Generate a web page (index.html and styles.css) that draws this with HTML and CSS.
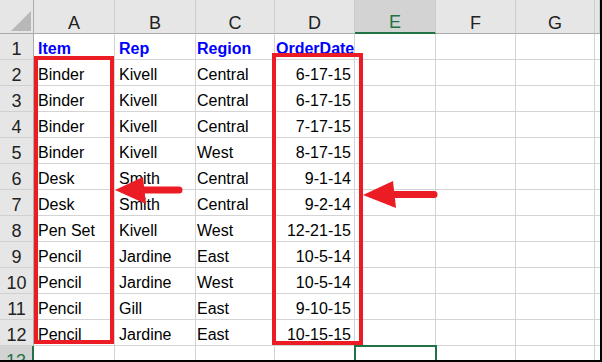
FILE: index.html
```html
<!DOCTYPE html>
<html lang="en">
<head>
    <meta charset="UTF-8">
    <meta name="viewport" content="width=device-width, initial-scale=1.0">
    <link rel="stylesheet" href="styles.css">
    <title>Sheet1</title>
</head>
<body>
    <div class="frame">
        <div class="sheet">
            <div class="corner"><span class="select-all"></span></div>
            <div class="col-head">A</div>
            <div class="col-head">B</div>
            <div class="col-head">C</div>
            <div class="col-head">D</div>
            <div class="col-head sel">E</div>
            <div class="col-head">F</div>
            <div class="col-head">G</div>
            <div class="col-head"></div>

            <div class="row-head">1</div>
            <div class="cell title">Item</div>
            <div class="cell title">Rep</div>
            <div class="cell title">Region</div>
            <div class="cell title">OrderDate</div>
            <div class="cell"></div><div class="cell"></div><div class="cell"></div><div class="cell"></div>

            <div class="row-head">2</div>
            <div class="cell">Binder</div>
            <div class="cell">Kivell</div>
            <div class="cell">Central</div>
            <div class="cell num">6-17-15</div>
            <div class="cell"></div><div class="cell"></div><div class="cell"></div><div class="cell"></div>

            <div class="row-head">3</div>
            <div class="cell">Binder</div>
            <div class="cell">Kivell</div>
            <div class="cell">Central</div>
            <div class="cell num">6-17-15</div>
            <div class="cell"></div><div class="cell"></div><div class="cell"></div><div class="cell"></div>

            <div class="row-head">4</div>
            <div class="cell">Binder</div>
            <div class="cell">Kivell</div>
            <div class="cell">Central</div>
            <div class="cell num">7-17-15</div>
            <div class="cell"></div><div class="cell"></div><div class="cell"></div><div class="cell"></div>

            <div class="row-head">5</div>
            <div class="cell">Binder</div>
            <div class="cell">Kivell</div>
            <div class="cell">West</div>
            <div class="cell num">8-17-15</div>
            <div class="cell"></div><div class="cell"></div><div class="cell"></div><div class="cell"></div>

            <div class="row-head">6</div>
            <div class="cell">Desk</div>
            <div class="cell">Smith</div>
            <div class="cell">Central</div>
            <div class="cell num">9-1-14</div>
            <div class="cell"></div><div class="cell"></div><div class="cell"></div><div class="cell"></div>

            <div class="row-head">7</div>
            <div class="cell">Desk</div>
            <div class="cell">Smith</div>
            <div class="cell">Central</div>
            <div class="cell num">9-2-14</div>
            <div class="cell"></div><div class="cell"></div><div class="cell"></div><div class="cell"></div>

            <div class="row-head">8</div>
            <div class="cell">Pen Set</div>
            <div class="cell">Kivell</div>
            <div class="cell">West</div>
            <div class="cell num">12-21-15</div>
            <div class="cell"></div><div class="cell"></div><div class="cell"></div><div class="cell"></div>

            <div class="row-head">9</div>
            <div class="cell">Pencil</div>
            <div class="cell">Jardine</div>
            <div class="cell">East</div>
            <div class="cell num">10-5-14</div>
            <div class="cell"></div><div class="cell"></div><div class="cell"></div><div class="cell"></div>

            <div class="row-head">10</div>
            <div class="cell">Pencil</div>
            <div class="cell">Jardine</div>
            <div class="cell">West</div>
            <div class="cell num">10-5-14</div>
            <div class="cell"></div><div class="cell"></div><div class="cell"></div><div class="cell"></div>

            <div class="row-head">11</div>
            <div class="cell">Pencil</div>
            <div class="cell">Gill</div>
            <div class="cell">East</div>
            <div class="cell num">9-10-15</div>
            <div class="cell"></div><div class="cell"></div><div class="cell"></div><div class="cell"></div>

            <div class="row-head">12</div>
            <div class="cell">Pencil</div>
            <div class="cell">Jardine</div>
            <div class="cell">East</div>
            <div class="cell num">10-15-15</div>
            <div class="cell"></div><div class="cell"></div><div class="cell"></div><div class="cell"></div>

            <div class="row-head sel">13</div>
            <div class="cell"></div><div class="cell"></div><div class="cell"></div><div class="cell"></div>
            <div class="cell active"></div>
            <div class="cell"></div><div class="cell"></div><div class="cell"></div>
        </div>

        <!-- red callouts drawn over the sheet -->
        <svg class="marks" width="600" height="360" viewBox="0 0 600 360">
            <g fill="none" stroke="#ec1c24" stroke-width="4">
                <rect x="36" y="58" width="76" height="284"/>
                <rect x="274" y="55" width="87" height="288"/>
            </g>
            <g stroke="#ec1c24" stroke-width="7" stroke-linecap="round">
                <line x1="140" y1="190" x2="179" y2="190"/>
                <line x1="390" y1="194.5" x2="434" y2="194.5"/>
            </g>
            <g fill="#ec1c24">
                <polygon points="115,190 143,177 146,204"/>
                <polygon points="363,195 393,181 396,208"/>
            </g>
        </svg>
    </div>
</body>
</html>
```

FILE: styles.css
```css
body {
    margin: 0;
    padding: 0;
    background-color: #fff;
}

.frame {
    position: relative;
    width: 602px;
    height: 362px;
    box-sizing: border-box;
    border-right: 2px solid #000;
    border-bottom: 2px solid #000;
    overflow: hidden;
}

.sheet {
    display: grid;
    grid-template-columns: 34px 81px 81px 79px 80px 81px 80px 79px 5px;
    grid-template-rows: 34px repeat(13, 26px);
    width: 600px;
    font-family: "Liberation Sans", Arial, sans-serif;
}

.sheet > div {
    box-sizing: border-box;
    display: flex;
    white-space: nowrap;
}

.corner {
    position: relative;
    background-color: #e6e6e6;
    border-right: 1px solid #ababab;
    border-bottom: 1px solid #ababab;
}

.select-all {
    position: absolute;
    right: 2px;
    bottom: 2px;
    width: 0;
    height: 0;
    border-left: 20px solid transparent;
    border-bottom: 20px solid #b8b8b8;
}

.col-head {
    justify-content: center;
    align-items: flex-end;
    background-color: #e6e6e6;
    border-right: 1px solid #cdcdcd;
    border-bottom: 1px solid #ababab;
    font-size: 18px;
    line-height: 20px;
    color: #222;
}

.col-head.sel {
    background-color: #d3d3d3;
    border-bottom: 2px solid #217346;
    color: #217346;
}

.row-head {
    justify-content: center;
    align-items: flex-end;
    background-color: #e6e6e6;
    border-right: 1px solid #ababab;
    border-bottom: 1px solid #d0d0d0;
    font-size: 18px;
    line-height: 20px;
    color: #222;
}

.row-head.sel {
    background-color: #d3d3d3;
    border-right: 2px solid #217346;
    color: #217346;
}

.cell {
    align-items: flex-end;
    padding: 0 3px 0 4px;
    border-right: 1px solid #d4d4d4;
    border-bottom: 1px solid #d4d4d4;
    font-size: 16px;
    line-height: 20px;
    color: #000;
}

/* columns C and D sit closer to their left gridline */
.sheet > .cell:nth-child(9n+4),
.sheet > .cell:nth-child(9n+5) {
    padding-left: 1px;
}

.cell.title {
    font-weight: bold;
    color: #0000ff;
}

.cell.num {
    justify-content: flex-end;
}

.cell.active {
    outline: 2px solid #217346;
    outline-offset: -1px;
}

.marks {
    position: absolute;
    top: 0;
    left: 0;
    pointer-events: none;
}
```
